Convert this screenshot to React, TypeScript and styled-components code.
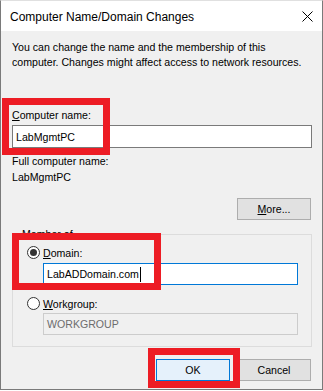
import styled, { createGlobalStyle, css } from "styled-components";

const GlobalStyle = createGlobalStyle`
    html, body {
        margin: 0;
        padding: 0;
        background: #ffffff;
    }
    * {
        box-sizing: border-box;
    }
`;

//styling
const Window = styled.div`
    position: relative;
    width: 323px;
    height: 390px;
    background: #f0f0f0;
    border: 1px solid #7a7a7a;
    border-top-color: #e0e0e0;
    font-family: "Liberation Sans", Arial, sans-serif;
    font-size: 10.6px;
    color: #000000;
    display: flex;
    flex-direction: column;
`;
const TitleBar = styled.div`
    height: 30px;
    background: #ffffff;
    display: flex;
    align-items: center;
    justify-content: space-between;
    padding: 0 9px 0 9px;
    flex-shrink: 0;
`;
const Title = styled.span`
    font-size: 12px;
    margin-top: 1px;
`;
const Close = styled.svg`
    width: 11px;
    height: 11px;
`;
const Body = styled.div`
    display: flex;
    flex-direction: column;
    padding: 9px 10px 0 11px;
`;
const Intro = styled.p`
    margin: 0;
    line-height: 15px;
`;
const Label = styled.div<{ $gap?: number }>`
    line-height: 15px;
    margin-top: ${(p) => p.$gap ?? 0}px;
`;
const TextBox = styled.div<{ $state?: "focus" | "disabled"; $gap?: number }>`
    height: ${(p) => (p.$state ? 22 : 23)}px;
    margin-top: ${(p) => p.$gap ?? 0}px;
    display: flex;
    align-items: center;
    padding-left: 3px;
    background: #ffffff;
    border: 1px solid #7a7a7a;
    ${(p) =>
        p.$state === "focus" &&
        css`
            border-color: #0078d7;
        `}
    ${(p) =>
        p.$state === "disabled" &&
        css`
            border-color: #cccccc;
            background: #f0f0f0;
            color: #6d6d6d;
        `}
`;
const Caret = styled.span`
    display: inline-block;
    width: 1px;
    height: 15px;
    background: #000000;
    margin-left: 1px;
`;
const ButtonRow = styled.div<{ $top: number }>`
    display: flex;
    justify-content: flex-end;
    gap: 7px;
    padding-right: 1px;
    margin-top: ${(p) => p.$top}px;
`;
const Button = styled.div<{ $primary?: boolean }>`
    width: 74px;
    height: 22px;
    display: flex;
    align-items: center;
    justify-content: center;
    background: #e1e1e1;
    border: 1px solid #adadad;
    ${(p) =>
        p.$primary &&
        css`
            background: #e5f1fb;
            border-color: #0078d7;
        `}
`;
const Group = styled.fieldset`
    margin: 7px 0 0 0;
    padding: 0 13px 11px 14px;
    border: 1px solid #dcdcdc;
    display: flex;
    flex-direction: column;
    min-width: 0;
`;
const Legend = styled.legend`
    padding: 0 1px;
    margin-left: -6px;
    line-height: 15px;
`;
const RadioRow = styled.div<{ $gap?: number }>`
    display: flex;
    align-items: center;
    gap: 3px;
    height: 15px;
    margin-top: ${(p) => p.$gap ?? 0}px;
`;
const Radio = styled.span<{ $checked?: boolean }>`
    width: 13px;
    height: 13px;
    border-radius: 50%;
    border: 1px solid #333333;
    background: #ffffff;
    display: flex;
    align-items: center;
    justify-content: center;
    &::after {
        content: "";
        width: 7px;
        height: 7px;
        border-radius: 50%;
        background: ${(p) => (p.$checked ? "#333333" : "transparent")};
    }
`;
const Indent = styled.div<{ $gap: number }>`
    padding-left: 16px;
    margin-top: ${(p) => p.$gap}px;
`;
const Highlight = styled.div<{ $x: number; $y: number; $w: number; $h: number }>`
    position: absolute;
    left: ${(p) => p.$x}px;
    top: ${(p) => p.$y}px;
    width: ${(p) => p.$w}px;
    height: ${(p) => p.$h}px;
    border: 7px solid #ed1c24;
    pointer-events: none;
`;

//dialog render
const App = () => {
    return (
        <>
            <GlobalStyle />
            <Window>
                <TitleBar>
                    <Title>Computer Name/Domain Changes</Title>
                    <Close viewBox="0 0 11 11">
                        <path d="M0.5 0.5 L10.5 10.5 M10.5 0.5 L0.5 10.5" stroke="#000" strokeWidth="1" />
                    </Close>
                </TitleBar>
                <Body>
                    <Intro>
                        You can change the name and the membership of this
                        <br />
                        computer. Changes might affect access to network resources.
                    </Intro>
                    <Label $gap={38}>
                        <u>C</u>omputer name:
                    </Label>
                    <TextBox $gap={2}>LabMgmtPC</TextBox>
                    <Label $gap={6}>Full computer name:</Label>
                    <Label $gap={1}>LabMgmtPC</Label>
                    <ButtonRow $top={13}>
                        <Button>
                            <span>
                                <u>M</u>ore...
                            </span>
                        </Button>
                    </ButtonRow>
                    <Group>
                        <Legend>Member of</Legend>
                        <RadioRow $gap={3}>
                            <Radio $checked />
                            <span>
                                <u>D</u>omain:
                            </span>
                        </RadioRow>
                        <Indent $gap={3}>
                            <TextBox $state="focus">
                                LabADDomain.com
                                <Caret />
                            </TextBox>
                        </Indent>
                        <RadioRow $gap={11}>
                            <Radio />
                            <span>
                                <u>W</u>orkgroup:
                            </span>
                        </RadioRow>
                        <Indent $gap={2}>
                            <TextBox $state="disabled">WORKGROUP</TextBox>
                        </Indent>
                    </Group>
                    <ButtonRow $top={12}>
                        <Button $primary>OK</Button>
                        <Button>Cancel</Button>
                    </ButtonRow>
                </Body>
                <Highlight $x={1} $y={97} $w={108} $h={57} />
                <Highlight $x={11} $y={232} $w={149} $h={57} />
                <Highlight $x={147} $y={347} $w={92} $h={40} />
            </Window>
        </>
    );
};

export default App;
